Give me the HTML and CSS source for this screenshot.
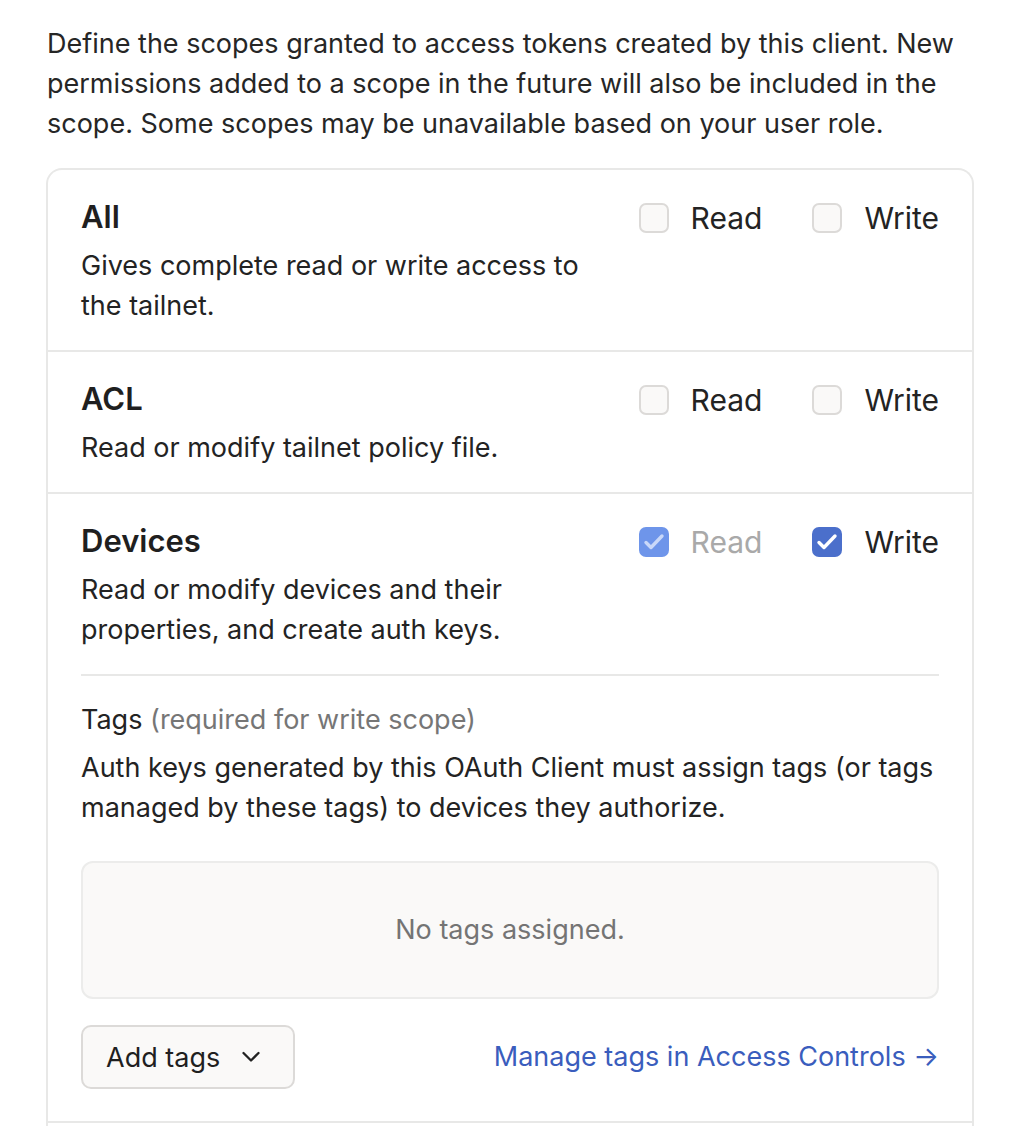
FILE: index.html
```html
<!DOCTYPE html>
<html>
<head>
<meta charset="utf-8">
<link rel="stylesheet" href="styles.css">
</head>
<body>
<div class="page">
  <p class="intro">Define the scopes granted to access tokens created by this client. New permissions added to a scope in the future will also be included in the scope. Some scopes may be unavailable based on your user role.</p>
  <div class="card">
    <div class="row">
      <div class="row-head">
        <div class="info">
          <div class="title">All</div>
          <div class="desc">Gives complete read or write access to the tailnet.</div>
        </div>
        <div class="perms">
          <label class="perm"><span class="box"></span><span class="perm-label">Read</span></label>
          <label class="perm"><span class="box"></span><span class="perm-label">Write</span></label>
        </div>
      </div>
    </div>
    <div class="row">
      <div class="row-head">
        <div class="info">
          <div class="title">ACL</div>
          <div class="desc">Read or modify tailnet policy file.</div>
        </div>
        <div class="perms">
          <label class="perm"><span class="box"></span><span class="perm-label">Read</span></label>
          <label class="perm"><span class="box"></span><span class="perm-label">Write</span></label>
        </div>
      </div>
    </div>
    <div class="row">
      <div class="row-head">
        <div class="info">
          <div class="title">Devices</div>
          <div class="desc">Read or modify devices and their properties, and create auth keys.</div>
        </div>
        <div class="perms">
          <label class="perm disabled"><span class="box checked faded"><svg viewBox="0 0 30 30" width="30" height="30"><path d="M7 15.5l5 5 11-11.5" fill="none" stroke="#c9d8f9" stroke-width="3.4" stroke-linecap="round" stroke-linejoin="round"/></svg></span><span class="perm-label">Read</span></label>
          <label class="perm"><span class="box checked"><svg viewBox="0 0 30 30" width="30" height="30"><path d="M7 15.5l5 5 11-11.5" fill="none" stroke="#ffffff" stroke-width="3.4" stroke-linecap="round" stroke-linejoin="round"/></svg></span><span class="perm-label">Write</span></label>
        </div>
      </div>
      <div class="tags">
        <div class="tags-title">Tags <span class="muted">(required for write scope)</span></div>
        <div class="desc">Auth keys generated by this OAuth Client must assign tags (or tags managed by these tags) to devices they authorize.</div>
        <div class="empty">No tags assigned.</div>
        <div class="actions">
          <button class="btn">Add tags <svg class="chev" viewBox="0 0 20 20" width="20" height="20"><path d="M2.5 6l7.5 7.5 7.5-7.5" fill="none" stroke="#222" stroke-width="2.3" stroke-linecap="round" stroke-linejoin="round"/></svg></button>
          <a class="link" href="#">Manage tags in Access Controls →</a>
        </div>
      </div>
    </div>
    <div class="row last"></div>
  </div>
</div>
</body>
</html>
```

FILE: styles.css
```css
html, body {
  margin: 0;
  padding: 0;
  background: #ffffff;
}
body {
  font-family: Inter, "Noto Sans", sans-serif;
  font-size: 27px;
  line-height: 40px;
  color: #232323;
}
.page {
  padding: 24px 44px 0 46px;
}
.intro {
  margin: 0 0 24px 1px;
  color: #262626;
}
.card {
  border: 2px solid #e8e8e7;
  border-radius: 16px;
  border-bottom: none;
  border-bottom-left-radius: 0;
  border-bottom-right-radius: 0;
}
.row {
  padding: 27px 33px 24px 33px;
  border-bottom: 2px solid #e8e8e7;
}
.row.last {
  padding: 0;
  height: 20px;
  border-bottom: none;
}
.row-head {
  display: flex;
  justify-content: space-between;
  align-items: flex-start;
}
.info {
  width: 520px;
}
.title {
  font-size: 31px;
  font-weight: 600;
  line-height: 40px;
  color: #1f1f1f;
}
.desc {
  margin-top: 9px;
}
.perms {
  display: flex;
  gap: 50px;
  padding-top: 1px;
}
.perm {
  display: flex;
  align-items: center;
  gap: 22px;
  font-size: 30px;
}
.box {
  width: 30px;
  height: 30px;
  box-sizing: border-box;
  border: 2px solid #dcdad8;
  border-radius: 7px;
  background: #faf9f8;
  display: flex;
}
.box.checked {
  border: none;
  background: #4b6fcb;
}
.box.faded {
  background: #6e95ea;
}
.perm.disabled .perm-label {
  color: #a9a9a9;
}
.tags {
  margin-top: 24px;
  border-top: 2px solid #e8e8e7;
  padding-top: 24px;
}
.tags-title {
  color: #232323;
}
.muted {
  color: #767676;
}
.tags .desc {
  margin-top: 8px;
}
.empty {
  margin-top: 33px;
  height: 138px;
  box-sizing: border-box;
  border: 2px solid #ececeb;
  border-radius: 12px;
  background: #faf9f8;
  display: flex;
  align-items: center;
  justify-content: center;
  color: #747474;
}
.actions {
  margin-top: 26px;
  margin-bottom: 8px;
  display: flex;
  justify-content: space-between;
  align-items: center;
}
.btn {
  font-family: inherit;
  font-size: 27px;
  color: #1f1f1f;
  height: 64px;
  padding: 0 32px 0 23px;
  border: 2px solid #dcdad8;
  border-radius: 10px;
  background: #faf9f8;
  display: flex;
  align-items: center;
  gap: 21px;
}
.chev {
  display: block;
}
.link {
  color: #3a5dbd;
  text-decoration: none;
}
```
